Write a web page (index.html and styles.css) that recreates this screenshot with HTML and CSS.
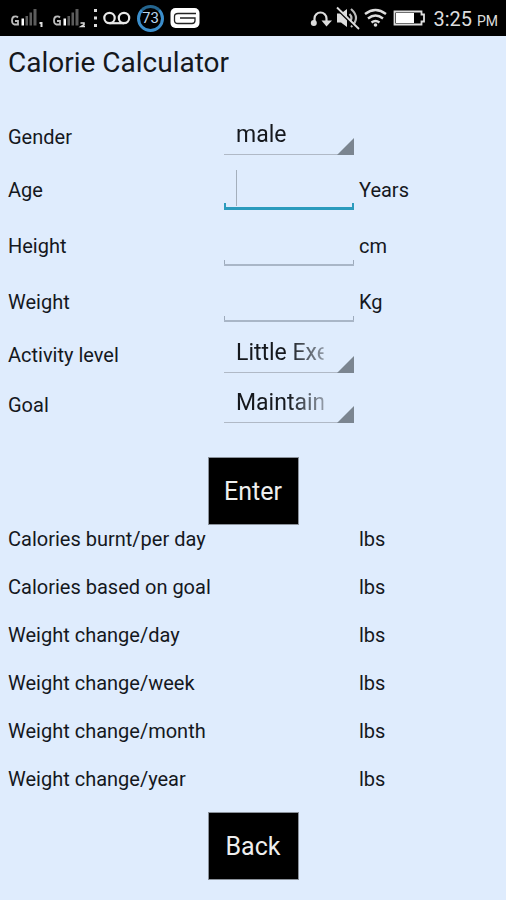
FILE: index.html
```html
<!DOCTYPE html>
<html lang="en">
<head>
<meta charset="utf-8">
<meta name="viewport" content="width=device-width, initial-scale=1">
<title>Calorie Calculator</title>
<link rel="stylesheet" href="styles.css">
</head>
<body>
<header class="status">
  <div class="status-group">
    <svg class="icon" width="42" height="24" viewBox="0 0 42 24" aria-hidden="true">
      <path d="M8 11.500Q6.500 10 4.500 10.500Q2 11 2 14.500T4.500 18.500H8V15H5" fill="none" stroke="#bbb" stroke-width="1.800"/>
      <path d="M11.500 12.500h2.500v7h-2.500z" fill="#fff"/>
      <path d="M15.500 10h2.500v9.500h-2.500zM19.500 6.500h2.500v13h-2.500zM23.500 3h3v16.500h-3z" fill="#5c5c5c"/>
      <path d="M29.500 17h2v4" fill="none" stroke="#ddd" stroke-width="2"/>
    </svg>
    <svg class="icon" width="42" height="24" viewBox="0 0 42 24" aria-hidden="true">
      <path d="M8 11.500Q6.500 10 4.500 10.500Q2 11 2 14.500T4.500 18.500H8V15H5" fill="none" stroke="#bbb" stroke-width="1.800"/>
      <path d="M11.500 12.500h2.500v7h-2.500z" fill="#fff"/>
      <path d="M15.500 10h2.500v9.500h-2.500zM19.500 6.500h2.500v13h-2.500zM23.500 3h3v16.500h-3z" fill="#5c5c5c"/>
      <path d="M28.500 17h3.500v1.500l-3 2h4" fill="none" stroke="#ddd" stroke-width="1.500"/>
    </svg>
    <svg class="icon" width="8" height="24" viewBox="0 0 8 24" aria-hidden="true">
      <path d="M0 3h3v3H0zM0 10.500h3v3H0zM0 18h3v3H0z" fill="#ddd"/>
    </svg>
    <svg class="icon" width="30" height="24" viewBox="0 0 30 24" aria-hidden="true">
      <g fill="none" stroke="#e8e8e8" stroke-width="2.200"><circle cx="7.500" cy="12" r="5.200"/><circle cx="22" cy="12" r="5.200"/><path d="M7.500 17.200H22"/></g>
    </svg>
    <span class="gauge">73</span>
    <svg class="icon keyboard" width="30" height="24" viewBox="0 0 30 24" aria-hidden="true">
      <rect x="0.500" y="2" width="29" height="20" rx="5" fill="#fff"/>
      <path d="M26 7.500H8q-3.500 0-3.500 3v4q0 3 3.500 3h14q3 0 3-3v-2.500H10" fill="none" stroke="#222" stroke-width="1.300"/>
    </svg>
  </div>
  <div class="status-group">
    <svg class="icon" width="26" height="24" viewBox="0 0 26 24" aria-hidden="true">
      <path d="M5.500 17v-4.500a6 6 0 0 1 12 0V16" fill="none" stroke="#ddd" stroke-width="2.200"/>
      <path d="M12.500 14.500h10.500L17.500 20.500z" fill="#ddd"/>
      <circle cx="4.800" cy="17" r="3" fill="#ddd"/>
    </svg>
    <svg class="icon" width="26" height="24" viewBox="0 0 26 24" aria-hidden="true">
      <path d="M2 7.500h4l6-4.500v18l-6-4.500H2z" fill="#ddd"/>
      <path d="M14.500 8q4 4 0 8M16 3q10 9 0 18" fill="none" stroke="#bbb" stroke-width="2.200"/>
      <path d="M2 3l21 21" stroke="#000" stroke-width="2"/><path d="M2 1.500l22 21.500" stroke="#ddd" stroke-width="1.800"/>
    </svg>
    <svg class="icon" width="28" height="24" viewBox="0 0 28 24" aria-hidden="true">
      <path d="M4 8q10.500-8 21 0M7 12.500q7.500-6 15 0M10.500 16.500q4-3 8 0" fill="none" stroke="#ddd" stroke-width="2.400"/>
      <circle cx="14.500" cy="19" r="1.800" fill="#ddd"/>
    </svg>
    <svg class="icon" width="40" height="24" viewBox="0 0 40 24" aria-hidden="true">
      <path d="M5.500 5.500h27v3h2.500v7h-2.500v3h-27z" fill="none" stroke="#ddd" stroke-width="1.800"/>
      <path d="M7 7h18v10H7z" fill="#fff"/>
    </svg>
    <span class="clock">3:25 <small>PM</small></span>
  </div>
</header>
<main>
  <h1>Calorie Calculator</h1>
  <form>
    <div class="row">
      <label for="gender">Gender</label>
      <div class="spinner"><select id="gender"><option>male</option><option>female</option></select></div>
    </div>
    <div class="row tall">
      <label for="age">Age</label>
      <div class="field active"><input id="age" type="text" inputmode="numeric"></div>
      <span>Years</span>
    </div>
    <div class="row tall">
      <label for="height">Height</label>
      <div class="field"><input id="height" type="text" inputmode="numeric"></div>
      <span>cm</span>
    </div>
    <div class="row tall">
      <label for="weight">Weight</label>
      <div class="field"><input id="weight" type="text" inputmode="numeric"></div>
      <span>Kg</span>
    </div>
    <div class="row">
      <label for="activity">Activity level</label>
      <div class="spinner"><select id="activity"><option>Little Exercise</option></select></div>
    </div>
    <div class="row">
      <label for="goal">Goal</label>
      <div class="spinner"><select id="goal"><option>Maintain weight</option></select></div>
    </div>
    <button class="action enter" type="button">Enter</button>
  </form>
  <dl class="results">
    <div><dt>Calories burnt/per day</dt><dd>lbs</dd></div>
    <div><dt>Calories based on goal</dt><dd>lbs</dd></div>
    <div><dt>Weight change/day</dt><dd>lbs</dd></div>
    <div><dt>Weight change/week</dt><dd>lbs</dd></div>
    <div><dt>Weight change/month</dt><dd>lbs</dd></div>
    <div><dt>Weight change/year</dt><dd>lbs</dd></div>
  </dl>
  <button class="action" type="button">Back</button>
</main>
</body>
</html>
```

FILE: styles.css
```css
* { box-sizing: border-box; }

body {
  margin: 0;
  min-height: 100vh;
  background: #dfecfd;
  color: #15181d;
  font: 20px/24px Roboto, "Liberation Sans", sans-serif;
}

.status {
  display: flex;
  justify-content: space-between;
  align-items: center;
  height: 36px;
  padding: 0 8px 0 10px;
  background: #000;
  color: #ddd;
}

.status-group { display: flex; align-items: center; }

.icon { display: block; flex: none; }

.gauge {
  width: 27px;
  height: 27px;
  margin-left: 5px;
  border: 3px solid #3b8ecb;
  border-top-color: #24658f;
  border-radius: 50%;
  color: #b9d5ee;
  font-size: 15px;
  line-height: 21px;
  text-align: center;
}

.keyboard { margin-left: 6px; }

.clock {
  margin-left: 4px;
  padding-top: 4px;
  white-space: nowrap;
}

.clock small { font-size: 14px; }

main { padding: 10px 8px 20px; }

h1 {
  margin: 0 0 32px;
  font-size: 28px;
  line-height: 34px;
  font-weight: 400;
}

.row, .results div {
  display: grid;
  grid-template-columns: 216px 130px 1fr;
  align-items: center;
}

.row { height: 50px; }
.row.tall { height: 56px; }
.row > span { padding-left: 5px; }

.spinner {
  position: relative;
  height: 36px;
  border-bottom: 1px solid #b0b9c6;
}

.spinner::after {
  content: "";
  position: absolute;
  right: 0;
  bottom: -1px;
  width: 17px;
  height: 17px;
  background: #7b8590;
  clip-path: polygon(100% 0, 100% 100%, 0 100%);
  pointer-events: none;
}

.spinner select, .field input {
  display: block;
  width: 100%;
  height: 32px;
  margin: 0;
  padding: 0 12px;
  border: 0;
  outline: 0;
  background: none;
  color: inherit;
  font: 23px/32px Roboto, "Liberation Sans", sans-serif;
}

.spinner select {
  appearance: none;
  mask-image: linear-gradient(to right, #000 64px, rgb(0 0 0 / 40%) 99px, transparent 100px);
}

.field {
  height: 40px;
  background:
    linear-gradient(#9daabb, #9daabb) left bottom / 1px 4px no-repeat,
    linear-gradient(#9daabb, #9daabb) right bottom / 1px 4px no-repeat;
  border-bottom: 2px solid #a9b6c7;
}

.field.active {
  background:
    linear-gradient(#a4afbc, #a4afbc) 12px 0 / 1px 36px no-repeat,
    linear-gradient(#2b9bbd, #2b9bbd) left bottom / 2px 4px no-repeat,
    linear-gradient(#2b9bbd, #2b9bbd) right bottom / 2px 4px no-repeat;
  border-bottom: 3px solid #2b9bbd;
}

.action {
  display: block;
  width: 91px;
  height: 68px;
  margin: 0 auto;
  padding: 2px 0 0;
  border: 1px solid #8b929b;
  background: #000;
  color: #eee;
  font: 25px/32px Roboto, "Liberation Sans", sans-serif;
}

.enter { margin-top: 27px; }

.results {
  display: grid;
  gap: 24px;
  margin: 2px 0 21px;
}

.results dd { grid-column: 3; margin: 0; padding-left: 5px; }
```
